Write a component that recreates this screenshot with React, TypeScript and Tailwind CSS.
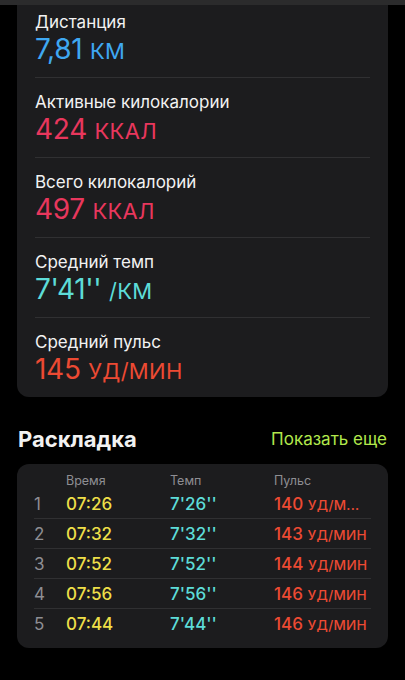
import React from "react";

const stats = [
  { label: "Дистанция", num: "7,81", unit: "км", color: "text-[#3fa8f2]" },
  { label: "Активные килокалории", num: "424", unit: "ккал", color: "text-[#e8375d]" },
  { label: "Всего килокалорий", num: "497", unit: "ккал", color: "text-[#e8375d]" },
  { label: "Средний темп", num: "7'41''", unit: "/км", color: "text-[#5ddcd8]" },
  { label: "Средний пульс", num: "145", unit: "уд/мин", color: "text-[#ec4a33]" },
];

const splits = [
  { n: 1, time: "07:26", pace: "7'26''", pulse: "140", unit: "уд/м..." },
  { n: 2, time: "07:32", pace: "7'32''", pulse: "143", unit: "уд/мин" },
  { n: 3, time: "07:52", pace: "7'52''", pulse: "144", unit: "уд/мин" },
  { n: 4, time: "07:56", pace: "7'56''", pulse: "146", unit: "уд/мин" },
  { n: 5, time: "07:44", pace: "7'44''", pulse: "146", unit: "уд/мин" },
];

const App = () => {
  return (
    <div className="min-h-[680px] w-full bg-black text-[#f2f2f2] font-['Inter','Noto_Sans',sans-serif]">
      <div className="h-[5px] w-full bg-[#2b2b2c]" />
      <div className="px-[17px]">
        {/* summary card */}
        <div className="rounded-b-[12px] bg-[#1c1c1e] px-[18px] pt-[6px]">
          {stats.map((s, i) => (
            <div
              key={s.label}
              className={
                i > 0
                  ? "border-t border-[#303032] pt-[13px] pb-[12px]"
                  : "pb-[12px]"
              }
            >
              <div className="text-[17px] leading-[22px]">{s.label}</div>
              <div className={`h-[32px] text-[28px] leading-[32px] tracking-[-0.3px] ${s.color}`}>
                {s.num}{" "}
                <span className="text-[22px] leading-none uppercase tracking-[0.3px]">
                  {s.unit}
                </span>
              </div>
            </div>
          ))}
        </div>

        {/* splits */}
        <div className="mt-[28px] flex items-center justify-between px-px">
          <h2 className="text-[22px] leading-[28px] font-bold">Раскладка</h2>
          <span className="text-[17px] leading-[28px] text-[#b2e84c]">Показать еще</span>
        </div>

        <div className="mt-[11px] rounded-[12px] bg-[#1c1c1e] px-[17px] pt-[9px] pb-[10px]">
          <div className="flex text-[12.5px] leading-[16px] text-[#8e8e93]">
            <span className="w-[32px]" />
            <span className="w-[104px]">Время</span>
            <span className="w-[104px]">Темп</span>
            <span>Пульс</span>
          </div>
          {splits.map((r, i) => (
            <div
              key={r.n}
              className={`flex items-center text-[17px] leading-[20px] ${
                i > 0 ? "h-[30px] border-t border-[#303032]" : "h-[29px]"
              }`}
            >
              <span className="w-[32px] text-[#8e8e93]">{r.n}</span>
              <span className="w-[104px] font-medium text-[#eedf48]">{r.time}</span>
              <span className="w-[104px] font-medium text-[#5ddcd8]">{r.pace}</span>
              <span className="font-medium text-[#ec4a33] whitespace-nowrap">
                {r.pulse}{" "}
                <span className="text-[13.5px] leading-none uppercase tracking-[0.3px]">
                  {r.unit}
                </span>
              </span>
            </div>
          ))}
        </div>
      </div>
    </div>
  );
};

export default App;
